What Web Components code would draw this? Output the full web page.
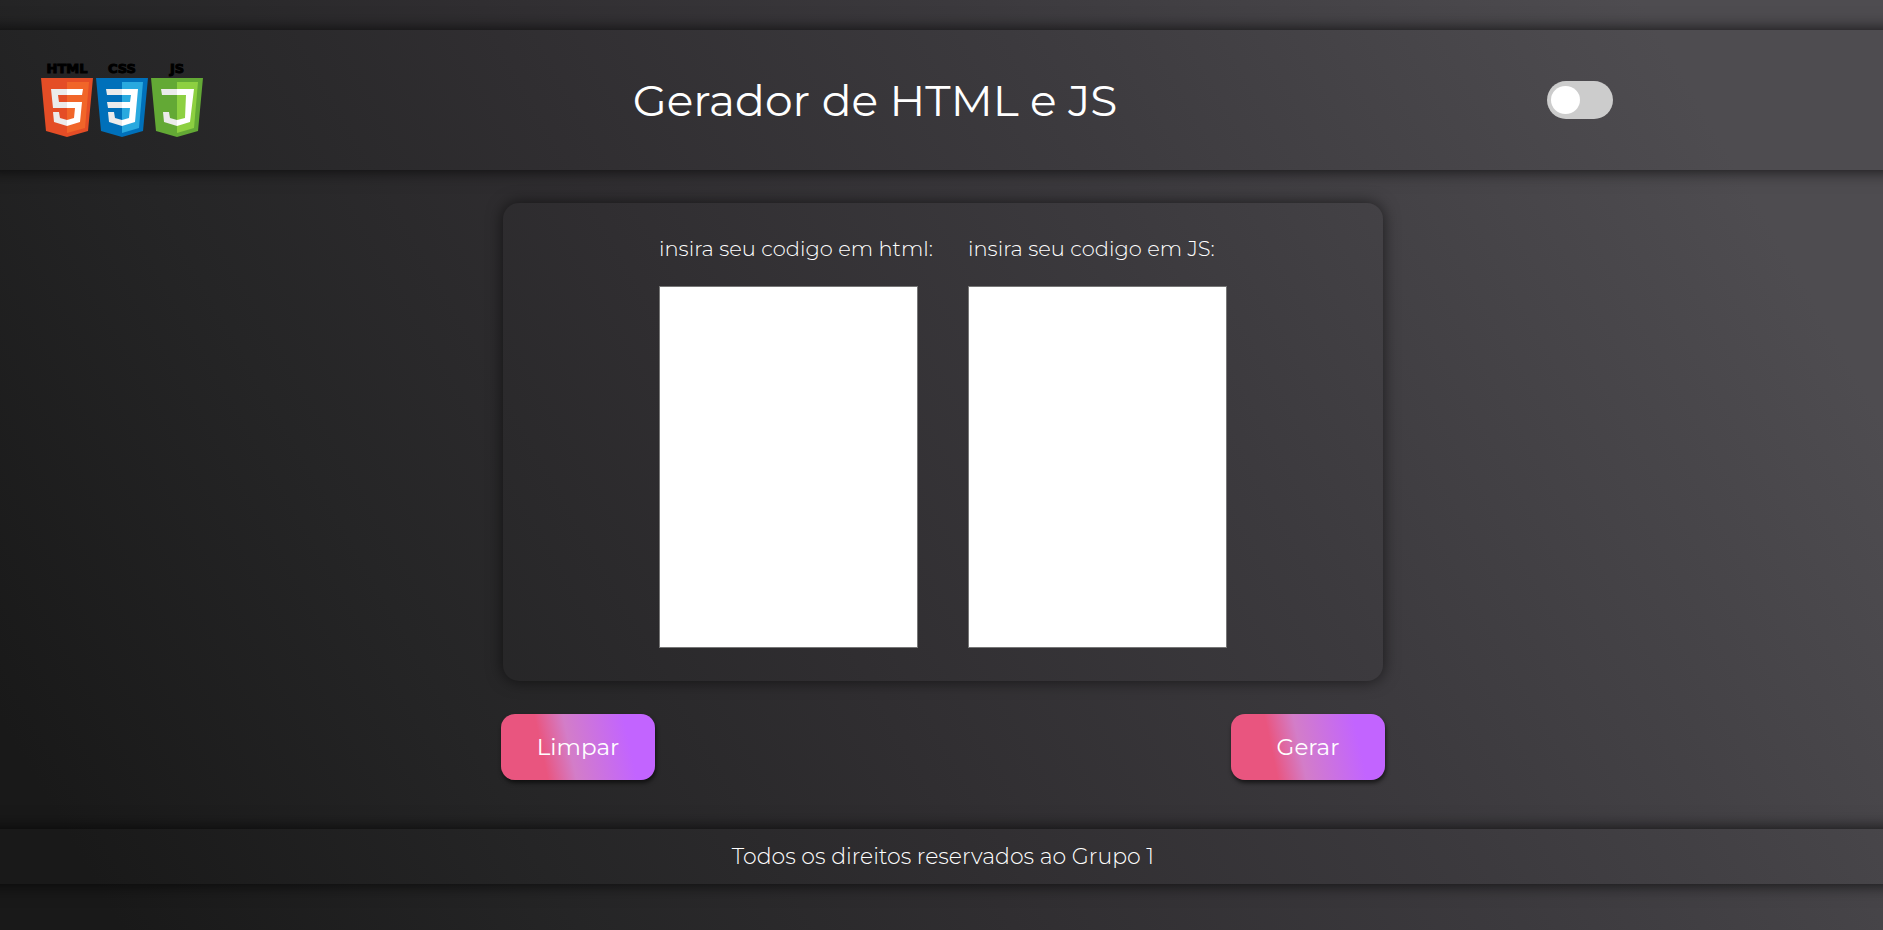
<!DOCTYPE html>
<html lang="pt-BR">
<head>
<meta charset="utf-8">
<title>Gerador de HTML e JS</title>
<style>
html { height: 100%; --page: linear-gradient(60deg, #191919 5%, #252526 24%, #302e31 42%, #3c3a3e 63%, #4e4c50 90%) fixed; }
body {
  margin: 0; min-height: 100%;
  font-family: Montserrat, "Open Sans", "Noto Sans", sans-serif;
  color: #fff;
  background: var(--page);
}
</style>
</head>
<body>
<generator-app></generator-app>
<script>
const define = (name, html) => {
  const template = document.createElement("template");
  template.innerHTML = html;
  customElements.define(name, class extends HTMLElement {
    constructor() {
      super();
      this.attachShadow({ mode: "open" }).append(template.content.cloneNode(true));
    }
  });
};

define("tech-logo", `
<style>
  :host { display: block; width: 162px; }
  svg { display: block; width: 100%; overflow: visible; }
  text { font: 700 13px "DejaVu Sans", sans-serif; text-anchor: middle; fill: #000; stroke: #000; stroke-width: 1; }
</style>
<svg viewBox="0 0 162 75" role="img" aria-label="HTML, CSS e JS">
  <text x="26" y="10">HTML</text>
  <text x="81" y="10">CSS</text>
  <text x="136" y="10">JS</text>
  <path fill="#e44d26" d="M0 15h52l-5 53-21 6-21-6z"/>
  <path fill="#f16529" d="M26 19h22l-4 46-18 5z"/>
  <path fill="#ebebeb" d="M10 26h16v6h-9l1 7h8v6H12zM12 49h6l1 6 7 2v6l-13-4z"/>
  <path fill="#fff" d="M26 26h16l-1 6H26zM26 39h15l-2 20-13 4v-6l7-2 1-10h-8z"/>
  <path fill="#0070ba" d="M55 15h52l-5 53-21 6-21-6z"/>
  <path fill="#29a9df" d="M81 19h21l-4 46-17 5z"/>
  <path fill="#ebebeb" d="M65 26h16v6H66zM66 39h15v6H67zM67 49h6l1 6 7 2v6l-13-4z"/>
  <path fill="#fff" d="M81 26h16l-3 33-13 4v-6l7-2 1-10h-8v-6h8l1-7h-9z"/>
  <path fill="#63a935" d="M110 15h52l-5 53-21 6-21-6z"/>
  <path fill="#8dd041" d="M136 19h21l-4 46-17 5z"/>
  <path fill="#ebebeb" d="M120 26h16v6h-15zM122 49h6l1 6 7 2v6l-13-4z"/>
  <path fill="#fff" d="M136 26h17l-4 33-13 4v-6l8-2 1-23h-9z"/>
</svg>`);

define("theme-switch", `
<style>
  :host { display: block; }
  input {
    appearance: none; display: block; box-sizing: border-box; margin: 0;
    width: 66px; height: 38px; padding: 5px 4px; border-radius: 19px;
    background: #ccc; cursor: pointer;
  }
  input::before { content: ""; display: block; width: 29px; height: 28px; border-radius: 50%; background: #fff; }
  input:checked::before { margin-left: auto; }
</style>
<input type="checkbox" role="switch" aria-label="Alternar tema">`);

/* The bar runs past both page edges so that its shadow stays even up to them. */
define("shadow-bar", `
<style>
  :host { display: block; margin: 0 -16px; padding: 0 16px; box-shadow: 0 0 16px rgba(0,0,0,.8); background: var(--page); }
</style>
<slot></slot>`);

define("code-field", `
<style>
  :host { display: grid; align-content: start; gap: 23px; width: 259px; }
  label { font-size: 21px; font-weight: 300; line-height: 28px; white-space: nowrap; }
  textarea {
    display: block; box-sizing: border-box; width: 259px; height: 362px; margin: 0; padding: 2px;
    border: 1px solid #767676; background: #fff; resize: none; font: 14px "Liberation Mono", monospace;
  }
</style>
<label for="code"><slot></slot></label>
<textarea id="code" spellcheck="false"></textarea>`);

define("action-button", `
<style>
  :host { display: block; }
  button {
    display: block; width: 154px; height: 66px; padding: 0; border: 0; border-radius: 14px;
    font-family: inherit; font-size: 23px; line-height: 32px; color: #fff; cursor: pointer;
    background: linear-gradient(78deg, #e9557f 28%, #d37dc8 45%, #c264ff 81%);
    box-shadow: 1px 3px 4px rgba(0,0,0,.6);
  }
</style>
<button type="button"><slot></slot></button>`);

define("generator-app", `
<style>
  :host { display: block; padding: 30px 0 42px; overflow-x: clip; }
  .head { display: flex; justify-content: space-between; align-items: center; height: 140px; padding: 0 270px 0 41px; box-sizing: border-box; }
  h1 { margin: 0; font-size: 44px; line-height: 60px; font-weight: 400; white-space: nowrap; }
  main { width: 884px; margin: 33px auto 49px; padding-left: 3px; display: grid; gap: 33px; }
  .panel {
    display: flex; justify-content: center; gap: 50px; box-sizing: border-box; height: 478px;
    margin: 0 2px; padding: 32px 0; border-radius: 16px; box-shadow: 0 0 16px rgba(0,0,0,.6);
  }
  .actions { display: flex; justify-content: space-between; }
  footer { padding-left: 3px; text-align: center; font-size: 22px; font-weight: 300; line-height: 55px; }
</style>
<shadow-bar>
  <header class="head">
    <tech-logo></tech-logo>
    <h1>Gerador de HTML e JS</h1>
    <theme-switch></theme-switch>
  </header>
</shadow-bar>
<main>
  <section class="panel">
    <code-field>insira seu codigo em html:</code-field>
    <code-field>insira seu codigo em JS:</code-field>
  </section>
  <div class="actions">
    <action-button>Limpar</action-button>
    <action-button>Gerar</action-button>
  </div>
</main>
<shadow-bar><footer>Todos os direitos reservados ao Grupo 1</footer></shadow-bar>`);
</script>
</body>
</html>
